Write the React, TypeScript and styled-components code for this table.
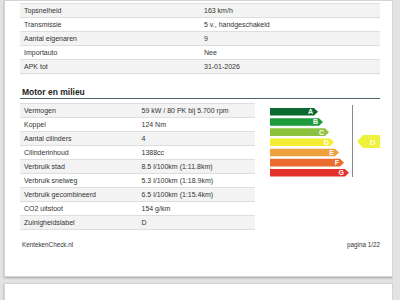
import styled, { createGlobalStyle } from 'styled-components';

const GlobalStyle = createGlobalStyle`
  html, body {
    margin: 0;
    padding: 0;
    background: #e3e3e3;
    font-family: 'Liberation Sans', Arial, sans-serif;
    color: #333;
  }
`;

const Viewer = styled.div`
  display: flex;
  flex-direction: column;
  gap: 6px;
  padding-left: 4px;
  width: 389px;
  height: 300px;
  overflow: hidden;
`;

const Page = styled.div<{ $height?: number }>`
  flex-shrink: 0;
  box-sizing: border-box;
  height: ${(p) => (p.$height ? `${p.$height}px` : 'auto')};
  background: #fff;
  border: 1px solid #d4d4d4;
  box-shadow: 0 1px 2px rgba(0, 0, 0, 0.28);
  padding: 2px 12px 0 15px;
  display: flex;
  flex-direction: column;
`;

const Table = styled.div<{ $width?: number }>`
  display: flex;
  flex-direction: column;
  width: ${(p) => (p.$width ? `${p.$width}px` : '100%')};
  border-top: 1px solid #dedede;
  flex-shrink: 0;
`;

const Row = styled.div<{ $striped: boolean }>`
  display: grid;
  grid-template-columns: 1fr 1fr;
  box-sizing: border-box;
  height: 14px;
  align-items: center;
  font-size: 7px;
  line-height: 13px;
  background: ${(p) => (p.$striped ? '#f3f3f3' : '#fff')};
  border-bottom: 1px solid #dedede;
  white-space: nowrap;
`;

const Cell = styled.span`
  padding-left: 4px;
  overflow: hidden;
`;

const Heading = styled.h2`
  margin: 13px 0 0;
  padding: 0 0 1px 2px;
  font-size: 8.5px;
  line-height: 10px;
  font-weight: bold;
  color: #1e1e1e;
  border-bottom: 1px solid #4c636a;
`;

const Section = styled.div`
  display: flex;
  margin-top: 4px;
`;

const Chart = styled.div`
  margin-left: 13px;
  width: 115px;
  height: 76px;
`;

const Footer = styled.div`
  display: flex;
  justify-content: space-between;
  margin-top: 10px;
  padding-left: 2px;
  font-size: 6.3px;
  line-height: 10px;
  color: #333;
`;

const general: [string, string][] = [
  ['Topsnelheid', '163 km/h'],
  ['Transmissie', '5 v., handgeschakeld'],
  ['Aantal eigenaren', '9'],
  ['Importauto', 'Nee'],
  ['APK tot', '31-01-2026'],
];

const motor: [string, string][] = [
  ['Vermogen', '59 kW / 80 PK bij 5.700 rpm'],
  ['Koppel', '124 Nm'],
  ['Aantal cilinders', '4'],
  ['Cilinderinhoud', '1388cc'],
  ['Verbruik stad', '8.5 l/100km (1:11.8km)'],
  ['Verbruik snelweg', '5.3 l/100km (1:18.9km)'],
  ['Verbruik gecombineerd', '6.5 l/100km (1:15.4km)'],
  ['CO2 uitstoot', '154 g/km'],
  ['Zuinigheidslabel', 'D'],
];

const labels = [
  { letter: 'A', color: '#0b6a2f', end: 50 },
  { letter: 'B', color: '#1d9a3c', end: 55 },
  { letter: 'C', color: '#8dc23f', end: 61 },
  { letter: 'D', color: '#f4ee33', end: 66 },
  { letter: 'E', color: '#efa03f', end: 71 },
  { letter: 'F', color: '#ea6c2e', end: 76 },
  { letter: 'G', color: '#e2302b', end: 81 },
];

function EnergyLabel() {
  return (
    <Chart>
      <svg width="115" height="76" viewBox="0 0 115 76">
        {labels.map((l, i) => {
          const y = 5 + i * 10.17;
          const h = 7.6;
          const tip = l.end - 4;
          return (
            <g key={l.letter}>
              <polygon
                points={`2,${y} ${tip},${y} ${l.end},${y + h / 2} ${tip},${y + h} 2,${y + h}`}
                fill={l.color}
              />
              <text
                x={tip - 1}
                y={y + 6.3}
                fontSize="7"
                fontWeight="bold"
                fill="#fff"
                textAnchor="end"
                fontFamily="'Liberation Sans', Arial, sans-serif"
              >
                {l.letter}
              </text>
            </g>
          );
        })}
        <line x1="84.5" y1="2" x2="84.5" y2="74" stroke="#8a8a8a" strokeWidth="1" />
        <polygon points="89,38.5 95,32 112,32 112,45 95,45" fill="#eef23c" />
        <text
          x="105"
          y="41.5"
          fontSize="8"
          fontWeight="bold"
          fill="#fbfbe0"
          textAnchor="middle"
          fontFamily="'Liberation Sans', Arial, sans-serif"
        >
          D
        </text>
      </svg>
    </Chart>
  );
}

export default function App() {
  return (
    <>
      <GlobalStyle />
      <Viewer>
        <Page $height={277}>
          <Table>
            {general.map(([k, v], i) => (
              <Row key={k} $striped={i % 2 === 0}>
                <Cell>{k}</Cell>
                <Cell>{v}</Cell>
              </Row>
            ))}
          </Table>

          <Heading>Motor en milieu</Heading>

          <Section>
            <Table $width={235}>
              {motor.map(([k, v], i) => (
                <Row key={k} $striped={i % 2 === 0}>
                  <Cell>{k}</Cell>
                  <Cell>{v}</Cell>
                </Row>
              ))}
            </Table>
            <EnergyLabel />
          </Section>

          <Footer>
            <span>KentekenCheck.nl</span>
            <span>pagina 1/22</span>
          </Footer>
        </Page>
        <Page $height={40} />
      </Viewer>
    </>
  );
}
